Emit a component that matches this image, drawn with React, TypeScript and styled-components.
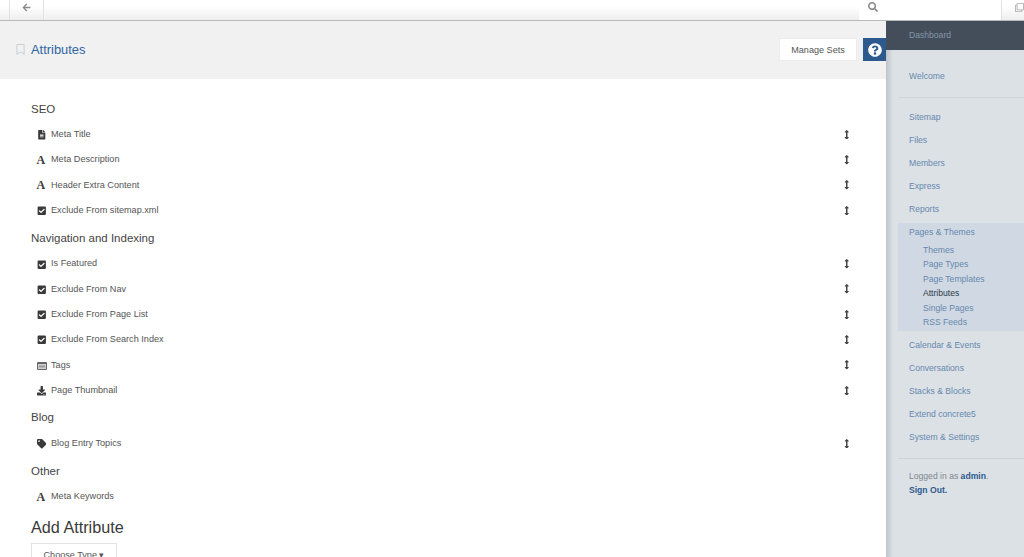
import React from "react";
import styled, { createGlobalStyle } from "styled-components";
import {
  FaArrowLeft,
  FaSearch,
  FaRegBookmark,
  FaQuestionCircle,
  FaFileAlt,
  FaCheckSquare,
  FaDownload,
  FaTag,
  FaArrowsAltV,
  FaRegClone,
} from "react-icons/fa";

const Global = createGlobalStyle`
  html, body { margin: 0; padding: 0; height: 100%; overflow: hidden; background: #fff; }
  body { font-family: "Liberation Sans", Arial, sans-serif; }
  #root { height: 100%; }
`;

const Page = styled.div`
  width: 1024px;
  height: 557px;
  display: flex;
  flex-direction: column;
  overflow: hidden;
`;

const TopBar = styled.div`
  flex: none;
  height: 20px;
  display: flex;
  background: linear-gradient(#ffffff 30%, #eeeeee);
  border-bottom: 1px solid #b9b9b9;
`;

const BackCell = styled.div`
  width: 35px;
  margin-left: 9px;
  display: flex;
  align-items: center;
  justify-content: center;
  padding-bottom: 6px;
  box-sizing: border-box;
  color: #8a8a8a;
  font-size: 9px;
  border-left: 1px solid #e2e2e2;
  border-right: 1px solid #e2e2e2;
`;

const SearchCell = styled.div`
  margin-left: auto;
  width: 142px;
  box-sizing: border-box;
  padding: 0 0 6px 9px;
  display: flex;
  align-items: center;
  background: #fff;
  color: #888;
  font-size: 10px;
`;

const CopyCell = styled.div`
  width: 23px;
  box-sizing: border-box;
  padding: 0 0 6px 13px;
  display: flex;
  align-items: center;
  color: #aaa;
  font-size: 9px;
  border-left: 1px solid #e2e2e2;
`;

const Body = styled.div`
  flex: 1;
  min-height: 0;
  display: flex;
`;

const Main = styled.main`
  flex: 1;
  min-width: 0;
`;

const Header = styled.header`
  height: 58px;
  box-sizing: border-box;
  display: flex;
  align-items: center;
  gap: 6px;
  padding: 0 0 1px 16px;
  background: #f1f1f1;
`;

const Bookmark = styled.span`
  display: flex;
  width: 9px;
  color: #c9cfd6;
  font-size: 11px;
`;

const Title = styled.h1`
  margin: 0 0 1px;
  flex: 1;
  font-size: 12.9px;
  font-weight: 400;
  color: #2f65a3;
`;

const ManageButton = styled.button`
  width: 78px;
  height: 23px;
  padding: 0;
  border: 1px solid #ececec;
  background: #fff;
  color: #555;
  font: 9.1px "Liberation Sans", Arial, sans-serif;
`;

const HelpButton = styled.button`
  width: 23px;
  height: 23px;
  padding: 0;
  border: 0;
  display: flex;
  align-items: center;
  justify-content: center;
  background: #2d5a8e;
  color: #fff;
  font-size: 14px;
`;

const Content = styled.div`
  padding: 21.5px 0 0 31px;
`;

const SectionTitle = styled.h4`
  margin: 0 0 4px;
  height: 17px;
  line-height: 17px;
  font-size: 11.5px;
  font-weight: 400;
  color: #444;
`;

const List = styled.ul`
  list-style: none;
  margin: 0 0 7px;
  padding: 0;
`;

const Row = styled.li`
  height: 25.3px;
  display: flex;
  align-items: center;
  padding: 0 35px 0 5.5px;
  font-size: 9.15px;
  color: #555;
`;

const RowIcon = styled.span`
  width: 14.5px;
  display: flex;
  align-items: center;
  padding-top: 2px;
  color: #3a3a3a;
  font-size: 9.5px;
`;

const SerifA = styled.span`
  font: 700 12px/9px "Liberation Serif", serif;
  color: #3a3a3a;
`;

const RowLabel = styled.span`
  flex: 1;
`;

const Handle = styled.span`
  display: flex;
  color: #444;
  font-size: 9.5px;
  margin-top: 1px;
`;

const AddTitle = styled.h3`
  margin: 4px 0 0;
  font-size: 16.2px;
  line-height: 22px;
  font-weight: 400;
  color: #3a3a3a;
`;

const ChooseButton = styled.button`
  margin-top: 5px;
  width: 86px;
  height: 24px;
  padding: 0;
  border: 1px solid #e3e3e3;
  background: #fff;
  color: #555;
  font: 9.1px "Liberation Sans", Arial, sans-serif;
`;

const Sidebar = styled.aside`
  flex: none;
  width: 138px;
  background: linear-gradient(90deg, #bfc4c8, #dce1e6 7px);
  font-size: 8.6px;
`;

const SideHead = styled.div`
  height: 29px;
  box-sizing: border-box;
  padding: 9px 0 0 23px;
  line-height: 11px;
  background: #434e5a;
  color: #8496a8;
`;

const SideSection = styled.div<{ $top?: number }>`
  margin-left: 12px;
  padding: ${(p) => p.$top ?? 0}px 0 0 11px;
`;

const SideLink = styled.div`
  height: 23px;
  line-height: 23px;
  color: #6688ae;
`;

const PanelLink = styled.div`
  height: 20.5px;
  line-height: 19px;
  color: #6688ae;
`;

const Divider = styled.hr<{ $after?: number }>`
  margin: 9px 0 ${(p) => p.$after ?? 9}px 12px;
  border: 0;
  border-top: 1px solid #cfd4d9;
`;

const OpenPanel = styled.div`
  margin: 1.5px 0 3.5px 12px;
  padding: 0 0 0 11px;
  height: 108px;
  box-sizing: border-box;
  background: #d0d9e3;
`;

const SubLink = styled.div<{ $active?: boolean }>`
  height: 14.4px;
  line-height: 14.4px;
  padding-left: 14px;
  color: ${(p) => (p.$active ? "#2c3848" : "#6688ae")};
`;

const Logged = styled.div`
  margin-left: 23px;
  line-height: 14px;
  color: #80868c;
`;

const Strong = styled.b`
  color: #2d5a8e;
`;

const groups = [
  {
    name: "SEO",
    items: [
      ["file", "Meta Title"],
      ["font", "Meta Description"],
      ["font", "Header Extra Content"],
      ["check", "Exclude From sitemap.xml"],
    ],
    drag: true,
  },
  {
    name: "Navigation and Indexing",
    items: [
      ["check", "Is Featured"],
      ["check", "Exclude From Nav"],
      ["check", "Exclude From Page List"],
      ["check", "Exclude From Search Index"],
      ["tagsbox", "Tags"],
      ["download", "Page Thumbnail"],
    ],
    drag: true,
  },
  { name: "Blog", items: [["tags", "Blog Entry Topics"]], drag: true },
  { name: "Other", items: [["font", "Meta Keywords"]], drag: false },
];

const TagBox = () => (
  <svg width="10" height="8" viewBox="0 0 10 8">
    <rect x="0" y="0" width="10" height="8" rx="1" fill="#666" />
    <rect x="1" y="2" width="8" height="5" fill="#cfcfcf" />
    <rect x="2" y="3.5" width="6" height="2" fill="#999" />
  </svg>
);

const icon = (k: string) => {
  switch (k) {
    case "file":
      return <FaFileAlt />;
    case "font":
      return <SerifA>A</SerifA>;
    case "check":
      return <FaCheckSquare />;
    case "tagsbox":
      return <TagBox />;
    case "download":
      return <FaDownload />;
    default:
      return <FaTag />;
  }
};

export default function App() {
  return (
    <Page>
      <Global />
      <TopBar>
        <BackCell>
          <FaArrowLeft />
        </BackCell>
        <SearchCell>
          <FaSearch />
        </SearchCell>
        <CopyCell>
          <FaRegClone />
        </CopyCell>
      </TopBar>
      <Body>
        <Main>
          <Header>
            <Bookmark>
              <FaRegBookmark />
            </Bookmark>
            <Title>Attributes</Title>
            <ManageButton>Manage Sets</ManageButton>
            <HelpButton>
              <FaQuestionCircle />
            </HelpButton>
          </Header>
          <Content>
            {groups.map((g) => (
              <section key={g.name}>
                <SectionTitle>{g.name}</SectionTitle>
                <List>
                  {g.items.map(([k, label]) => (
                    <Row key={label}>
                      <RowIcon>{icon(k)}</RowIcon>
                      <RowLabel>{label}</RowLabel>
                      {g.drag && (
                        <Handle>
                          <FaArrowsAltV />
                        </Handle>
                      )}
                    </Row>
                  ))}
                </List>
              </section>
            ))}
            <AddTitle>Add Attribute</AddTitle>
            <ChooseButton>Choose Type ▾</ChooseButton>
          </Content>
        </Main>
        <Sidebar>
          <SideHead>Dashboard</SideHead>
          <SideSection $top={15}>
            <SideLink>Welcome</SideLink>
          </SideSection>
          <Divider $after={8} />
          <SideSection>
            <SideLink>Sitemap</SideLink>
            <SideLink>Files</SideLink>
            <SideLink>Members</SideLink>
            <SideLink>Express</SideLink>
            <SideLink>Reports</SideLink>
          </SideSection>
          <OpenPanel>
            <PanelLink>Pages &amp; Themes</PanelLink>
            <SubLink>Themes</SubLink>
            <SubLink>Page Types</SubLink>
            <SubLink>Page Templates</SubLink>
            <SubLink $active>Attributes</SubLink>
            <SubLink>Single Pages</SubLink>
            <SubLink>RSS Feeds</SubLink>
          </OpenPanel>
          <SideSection>
            <SideLink>Calendar &amp; Events</SideLink>
            <SideLink>Conversations</SideLink>
            <SideLink>Stacks &amp; Blocks</SideLink>
            <SideLink>Extend concrete5</SideLink>
            <SideLink>System &amp; Settings</SideLink>
          </SideSection>
          <Divider $after={10} />
          <Logged>
            Logged in as <Strong>admin</Strong>.
            <br />
            <Strong>Sign Out.</Strong>
          </Logged>
        </Sidebar>
      </Body>
    </Page>
  );
}
